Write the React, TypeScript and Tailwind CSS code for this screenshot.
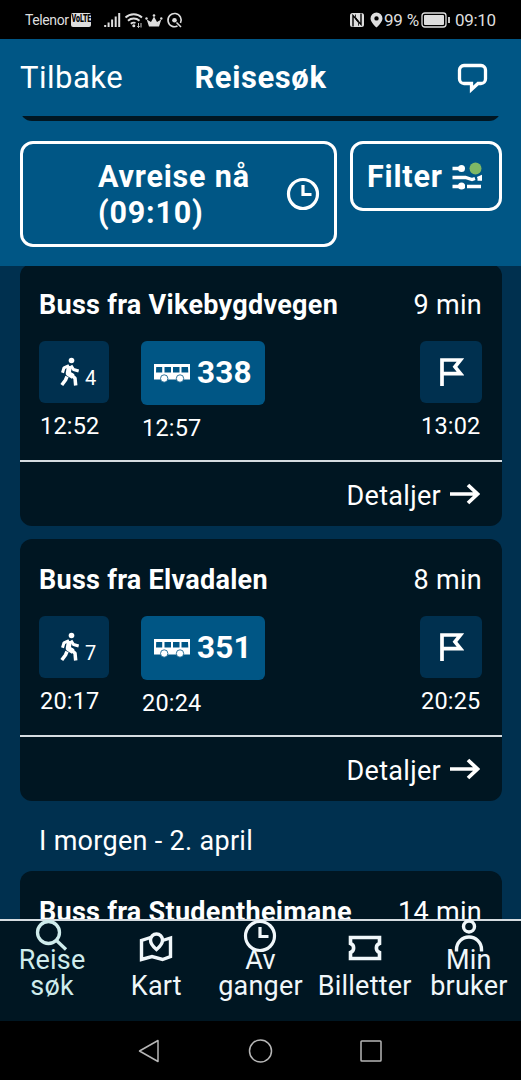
import type { ReactNode } from "react";

const trips = [
  { title: "Buss fra Vikebygdvegen", duration: "9 min", walk: "4", line: "338", start: "12:52", depart: "12:57", end: "13:02" },
  { title: "Buss fra Elvadalen", duration: "8 min", walk: "7", line: "351", start: "20:17", depart: "20:24", end: "20:25" },
];

function StatusBar() {
  return (
    <div className="flex h-[39px] shrink-0 items-center bg-black pr-[24px] pl-[25px] text-[#dedede]">
      <span className="w-[46px] text-[14px] leading-[20px] tracking-[-0.4px] whitespace-nowrap">Telenor</span>
      <span className="flex h-[14px] w-[20px] items-center justify-center rounded-[2px] bg-[#dedede] text-black">
        <span className="scale-x-[0.68] text-[10.500px] leading-none font-black tracking-[-0.2px]">VoLTE</span>
      </span>
      <svg className="ml-[13px]" width="80" height="18" viewBox="0 0 80 18" fill="none" stroke="currentColor">
        <path d="M1.2 16v-2M4.600 16v-4.500M8.100 16V8.500M11.700 16V5.500M15.200 16V2" strokeWidth="2" />
        <path d="M21.500 6.500a12 12 0 0 1 16.500 0M24 9.700a8.500 8.500 0 0 1 11.500 0M26.800 12.700a5 5 0 0 1 4.700-.8" strokeWidth="1.9" />
        <circle cx="29.800" cy="14.800" r="1.500" fill="currentColor" stroke="none" />
        <path d="M34.500 12v4.500m-1.300-1.300 1.300 1.300 1.200-1.300M37 16.500V12" strokeWidth=".9" />
        <path d="M45 15.500h10l2.300-7-4.300 2.500-3-5.500-3 5.500-4.300-2.500Z" fill="currentColor" stroke="none" />
        <circle cx="42.500" cy="7.500" r="1.200" fill="currentColor" stroke="none" />
        <circle cx="50" cy="4.500" r="1.300" fill="currentColor" stroke="none" />
        <circle cx="57.300" cy="7.500" r="1.200" fill="currentColor" stroke="none" />
        <path d="M73.500 15a6.600 6.600 0 1 1 3-3M72.500 11.500l4.500 4.500" strokeWidth="1.600" />
        <circle cx="70.500" cy="9.200" r="2.300" fill="currentColor" stroke="none" />
      </svg>
      <svg className="ml-auto" width="34" height="16" viewBox="0 0 34 16" fill="none">
        <rect x="0" y="1" width="14" height="14" rx="2.500" fill="currentColor" />
        <path d="M3 14.500V3.500l8 9V1.500" stroke="#000" strokeWidth="1.400" />
        <path d="M5.500 2.500v2.700l3 4M8.500 13.700v-2.900l-3-3.600" stroke="#000" strokeWidth=".8" />
        <path fillRule="evenodd" d="M26.500.5a6 6 0 0 0-6 6c0 4 6 9 6 9s6-5 6-9a6 6 0 0 0-6-6Zm0 3.700a2.200 2.200 0 1 1 0 4.400 2.200 2.200 0 0 1 0-4.400Z" fill="currentColor" />
      </svg>
      <span className="mr-[2px] w-[37px] text-[17px] leading-[20px] tracking-[-0.2px] whitespace-nowrap">99 %</span>
      <svg className="-ml-[2px]" width="30" height="16" viewBox="0 0 30 16" fill="none">
        <rect x="1" y="1" width="24" height="14" rx="2.800" stroke="currentColor" strokeWidth="1.300" />
        <rect x="3" y="3" width="20" height="10" rx="1" fill="currentColor" />
        <path d="M28 5v6" stroke="currentColor" strokeWidth="1.800" />
      </svg>
      <span className="ml-[4px] w-[42px] text-[17px] leading-[20px] tracking-[-0.3px] whitespace-nowrap">09:10</span>
    </div>
  );
}

function ClockIcon() {
  return (
    <svg width="34" height="34" viewBox="0 0 34 34" fill="none" stroke="currentColor" strokeWidth="3.200">
      <circle cx="17" cy="17" r="14.500" />
      <path d="M17 8v9.500h8.500" />
    </svg>
  );
}

function Header() {
  return (
    <header className="flex h-[227px] shrink-0 flex-col bg-[#005685] text-white">
      <div className="grid h-[77px] grid-cols-[1fr_auto_1fr] items-center pr-[33px] pl-[20px] text-[31px] leading-[36px]">
        <span className="tracking-[0.5px]">Tilbake</span>
        <span className="ml-[13px] font-bold tracking-[0.6px]">Reisesøk</span>
        <svg className="justify-self-end" width="31" height="32" viewBox="0 0 31 32" fill="none" stroke="currentColor" strokeWidth="3.300">
          <path d="M7 3.500h17a4.500 4.500 0 0 1 4.500 4.500v9a4.500 4.500 0 0 1-4.500 4.500h-3L14.500 27.500v-6H7A4.500 4.500 0 0 1 2.500 17V8A4.500 4.500 0 0 1 7 3.500Z" />
        </svg>
      </div>
      <div className="mx-[20px] h-[5px] overflow-hidden">
        <div className="-mt-[20px] h-[25px] rounded-b-[12px] bg-[#001622]" />
      </div>
      <div className="mt-[20px] flex items-start gap-[13px] px-[20px] text-[30.500px] leading-[36px] font-bold tracking-[0.8px]">
        <button className="flex h-[106px] w-[317px] shrink-0 items-center justify-between rounded-[13px] border-[3px] border-white pr-[14px] pl-[75px] text-left">
          <span className="pt-px">
            Avreise nå
            <br />
            (09:10)
          </span>
          <ClockIcon />
        </button>
        <button className="flex h-[70px] w-[152px] shrink-0 items-center justify-between rounded-[13px] border-[3px] border-white pr-[17px] pl-[14px]">
          <span className="pt-px tracking-[0.8px]">Filter</span>
          <svg width="30" height="28" viewBox="0 0 30 28" fill="none" stroke="currentColor" strokeWidth="3.300">
            <path d="M.5 6.500h8M.5 15.500h13l6.500 2 3-1M25.500 16.500l3-1.300v1.800h-3M.5 24.500H13M15 24.500H29" />
            <circle cx="9.500" cy="6.500" r="3.500" fill="currentColor" stroke="none" />
            <circle cx="9.500" cy="24" r="3.500" fill="currentColor" stroke="none" />
            <circle cx="23.500" cy="6.500" r="6" fill="#7fb865" stroke="none" />
          </svg>
        </button>
      </div>
    </header>
  );
}

function WalkIcon() {
  return (
    <svg width="20" height="30" viewBox="0 0 20 30" fill="none" stroke="currentColor">
      <circle cx="11.500" cy="3.500" r="2.800" fill="currentColor" stroke="none" />
      <path d="M9.500 9 8.200 16.500l5 3" strokeWidth="5" strokeLinejoin="round" />
      <path d="M9 8.500 4 10.800l-1.500 5M11 8.500l2.500 4 5.200 1.500" strokeWidth="3" strokeLinejoin="round" />
      <path d="m10.500 17 4.500 4.200.7 7.300M7 19.500l-1.500 3.500L1.800 28" strokeWidth="3.500" strokeLinejoin="round" />
    </svg>
  );
}

function BusIcon() {
  return (
    <svg width="36" height="20" viewBox="0 0 36 20" fill="none">
      <path d="M0 1h36v15.500H0Z" fill="currentColor" />
      <path d="M2.200 4h6v5.500H2ZM10.500 4h6.500v5.500h-6.500ZM19 4h6.500v5.500H19ZM27.500 4H34l.3 5.500h-6.800Z" fill="#005685" />
      <circle cx="10.200" cy="15.500" r="3.700" fill="currentColor" stroke="#005685" strokeWidth=".8" />
      <circle cx="26" cy="15.500" r="3.700" fill="currentColor" stroke="#005685" strokeWidth=".8" />
    </svg>
  );
}

function CardTitle({ title, duration }: { title: string; duration: string }) {
  return (
    <div className="flex justify-between pt-[25px] pr-[20px] pl-[19px] text-[27px] leading-[32px]">
      <span className="font-bold tracking-[0.28px]">{title}</span>
      <span className="tracking-[0.3px]">{duration}</span>
    </div>
  );
}

function Leg({ children, time, className }: { children: ReactNode; time: string; className: string }) {
  return (
    <div className="flex flex-col items-start">
      <div className={`flex rounded-[6px] ${className}`}>{children}</div>
      <span className="mt-[10px] ml-px text-[23.500px] leading-[26px] tracking-[0.2px]">{time}</span>
    </div>
  );
}

function TripCard({ trip }: { trip: (typeof trips)[number] }) {
  return (
    <article className="h-[262px] shrink-0 rounded-[12px] bg-[#001622]">
      <CardTitle title={trip.title} duration={trip.duration} />
      <div className="flex h-[118px] items-start pt-[20px] pr-[20px] pl-[19px]">
        <Leg time={trip.start} className="h-[62px] w-[70px] pt-[16px] pl-[21px] bg-[#00304f]">
          <WalkIcon />
          <span className="mt-[8px] ml-[5px] text-[20px] leading-[26px]">{trip.walk}</span>
        </Leg>
        <div className="ml-[32px]">
          <Leg time={trip.depart} className="h-[64px] w-[124px] items-center bg-[#005685] pl-[13px]">
            <BusIcon />
            <span className="ml-[7px] text-[31.500px] leading-[36px] font-bold tracking-[0.2px]">{trip.line}</span>
          </Leg>
        </div>
        <div className="ml-auto">
          <Leg time={trip.end} className="h-[62px] w-[62px] items-center justify-center bg-[#00304f]">
            <svg width="26" height="32" viewBox="0 0 26 32" fill="none" stroke="currentColor" strokeWidth="3.700">
              <path d="M4 30V4h18.500l-5.500 6.800 5.500 6.800H4" />
            </svg>
          </Leg>
        </div>
      </div>
      <div className="mt-[21px] flex h-[65px] items-center justify-end border-t-2 border-[#d5dce1] pt-[5px] pr-[22px] text-[27px] leading-[32px] tracking-[0.3px]">
        <span>Detaljer</span>
        <svg className="mb-[5px] ml-[9px]" width="30" height="22" viewBox="0 0 30 22" fill="none" stroke="currentColor" strokeWidth="3.700">
          <path d="M0 11h27M18 2l9.500 9-9.500 9" />
        </svg>
      </div>
    </article>
  );
}

function Tab({ icon, children, color, twoLines }: { icon: ReactNode; children: ReactNode; color: string; twoLines?: boolean }) {
  return (
    <div className={`flex flex-col items-center text-center text-[27px] leading-[26px] tracking-[0.2px] whitespace-nowrap ${color} ${twoLines ? "-mt-[2px]" : "pt-[10px]"}`}>
      {icon}
      <div className={twoLines ? "-mt-[6px]" : "mt-[8px]"}>{children}</div>
    </div>
  );
}

function BottomTabs() {
  return (
    <nav className="grid h-[102px] shrink-0 grid-cols-5 border-t-2 border-[#d5dce1] bg-[#001622]">
      <Tab twoLines color="text-[#cfecec]" icon={
        <svg width="34" height="34" viewBox="0 0 34 34" fill="none" stroke="currentColor" strokeWidth="3.300">
          <circle cx="13.500" cy="13.500" r="11" />
          <path d="m21.500 21.500 9.500 9" />
        </svg>
      }>Reise<br />søk</Tab>
      <Tab color="text-[#f0f7fa]" icon={
        <svg width="34" height="34" viewBox="0 0 34 34" fill="none" stroke="currentColor" strokeWidth="3.400">
          <path d="M11.500 6.500 2.500 9.500v19l10.500-3 10.500 3 8-3V7l-8 2.500" />
          <path d="M17.500 18.500s-6-5-6-9.500a6 6 0 0 1 12 0c0 4.500-6 9.500-6 9.500Z" />
        </svg>
      }>Kart</Tab>
      <Tab twoLines color="text-[#f0f7fa]" icon={<ClockIcon />}>Av<br />ganger</Tab>
      <Tab color="text-[#f0f7fa]" icon={
        <svg width="34" height="34" viewBox="0 0 34 34" fill="none" stroke="currentColor" strokeWidth="3.600">
          <path d="M2.500 6.500h29v6a4.800 4.800 0 0 0 0 9v6h-29v-6a4.800 4.800 0 0 0 0-9Z" />
        </svg>
      }>Billetter</Tab>
      <Tab twoLines color="text-[#f0f7fa]" icon={
        <svg width="34" height="34" viewBox="0 0 34 34" fill="none" stroke="currentColor" strokeWidth="3.400">
          <circle cx="17" cy="7.500" r="5.500" />
          <path d="M4.500 32.500v-2a12.500 12.500 0 0 1 25 0v2" />
        </svg>
      }>Min<br />bruker</Tab>
    </nav>
  );
}

export default function App() {
  return (
    <div className="flex h-[1080px] w-[521px] flex-col overflow-hidden bg-[#00304f] font-['Roboto',sans-serif] text-white">
      <StatusBar />
      <Header />
      <main className="h-[653px] shrink-0 overflow-hidden pr-[19px] pl-[20px]">
        <div className="-mt-[2px] flex flex-col gap-[13px]">
          {trips.map((trip) => <TripCard key={trip.line} trip={trip} />)}
        </div>
        <h2 className="flex h-[70px] items-center pt-[9px] pl-[19px] text-[27px] leading-[32px] tracking-[0.3px]">I morgen - 2. april</h2>
        <article className="h-[262px] rounded-[12px] bg-[#001622]">
          <CardTitle title="Buss fra Studentheimane" duration="14 min" />
        </article>
      </main>
      <BottomTabs />
      <div className="flex h-[59px] shrink-0 items-center justify-center gap-[86px] bg-black">
        <svg width="25" height="26" viewBox="0 0 25 26" fill="none" stroke="#b7b7b7" strokeWidth="1.500">
          <path d="M21 2.500v21L2.500 13Z" strokeLinejoin="round" />
        </svg>
        <svg width="25" height="26" viewBox="0 0 25 26" fill="none" stroke="#b7b7b7" strokeWidth="1.500">
          <circle cx="12.500" cy="13" r="11" />
        </svg>
        <svg width="25" height="26" viewBox="0 0 25 26" fill="none" stroke="#b7b7b7" strokeWidth="1.500">
          <rect x="2" y="3" width="20" height="20" rx=".8" />
        </svg>
      </div>
    </div>
  );
}
